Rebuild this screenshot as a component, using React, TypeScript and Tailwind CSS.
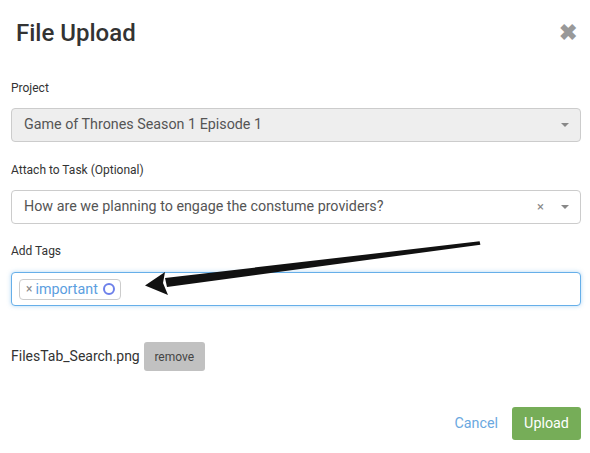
import React from "react";

const Caret = () => (
    <span className="w-0 h-0 border-l-[4px] border-r-[4px] border-t-[4px] border-l-transparent border-r-transparent border-t-[#888]" />
);

export default function App() {
    return (
        <div className="relative w-[590px] h-[453px] bg-white text-[#333] font-['Roboto','Liberation_Sans',sans-serif] overflow-hidden">
            {/* Header */}
            <div className="flex items-center justify-between pt-[17px] pl-[16px] pr-[13px] h-[49px]">
                <h1 className="text-[24px] leading-[32px] font-medium text-[#333]">File Upload</h1>
                <span className="text-[22px] leading-none font-bold text-[#999]">✖</span>
            </div>

            <div className="px-[11px] pr-[9px]">
                {/* Project */}
                <div className="mt-[31px] text-[12px] leading-[16px] text-[#333]">Project</div>
                <div className="mt-[12px] h-[34px] flex items-center justify-between rounded border border-[#ccc] bg-[#eee] pl-[12px] pr-[11px]">
                    <span className="text-[14.3px] text-[#555]">Game of Thrones Season 1 Episode 1</span>
                    <Caret />
                </div>

                {/* Task */}
                <div className="mt-[20px] text-[12px] leading-[16px] text-[#333]">Attach to Task (Optional)</div>
                <div className="mt-[12px] h-[34px] flex items-center justify-between rounded border border-[#ccc] bg-white pl-[12px] pr-[11px]">
                    <span className="text-[14.3px] text-[#555]">How are we planning to engage the constume providers?</span>
                    <div className="flex items-center gap-[17px]">
                        <span className="text-[13px] text-[#888]">×</span>
                        <Caret />
                    </div>
                </div>

                {/* Tags */}
                <div className="mt-[19px] text-[12px] leading-[16px] text-[#333]">Add Tags</div>
                <div className="mt-[13px] h-[34px] flex items-center rounded border border-[#66afe9] shadow-[0_0_4px_rgba(102,175,233,0.5)] bg-white pl-[7px]">
                    <div className="h-[21px] flex items-center gap-[3px] rounded border border-[#ccc] bg-white pl-[6px] pr-[5px]">
                        <span className="text-[12px] text-[#888] leading-none">×</span>
                        <span className="text-[14.3px] text-[#5b9ee0] leading-none">important</span>
                        <span className="ml-[2px] w-[12px] h-[12px] rounded-full border-[2.5px] border-[#6d80ea]" />
                    </div>
                </div>

                {/* File */}
                <div className="mt-[36px] flex items-center gap-[4px]">
                    <span className="text-[14px] text-[#333]">FilesTab_Search.png</span>
                    <button className="h-[29px] w-[61px] rounded-[3px] bg-[#c1c1c1] text-[12px] text-[#444]">remove</button>
                </div>

                {/* Footer */}
                <div className="mt-[36px] flex items-center justify-end gap-[14px]">
                    <span className="text-[14.3px] text-[#6aa8e0]">Cancel</span>
                    <button className="h-[33px] w-[69px] rounded-[3px] bg-[#76ad58] text-[14.3px] text-white">Upload</button>
                </div>
            </div>

            {/* Arrow annotation */}
            <svg className="absolute left-0 top-0" width="590" height="453" viewBox="0 0 590 453">
                <polygon points="479.6,241.3 480.4,244.7 167,287 165,278" fill="#111" />
                <polygon points="145,285.5 165,272 163,283 168,295" fill="#111" />
            </svg>
        </div>
    );
}
